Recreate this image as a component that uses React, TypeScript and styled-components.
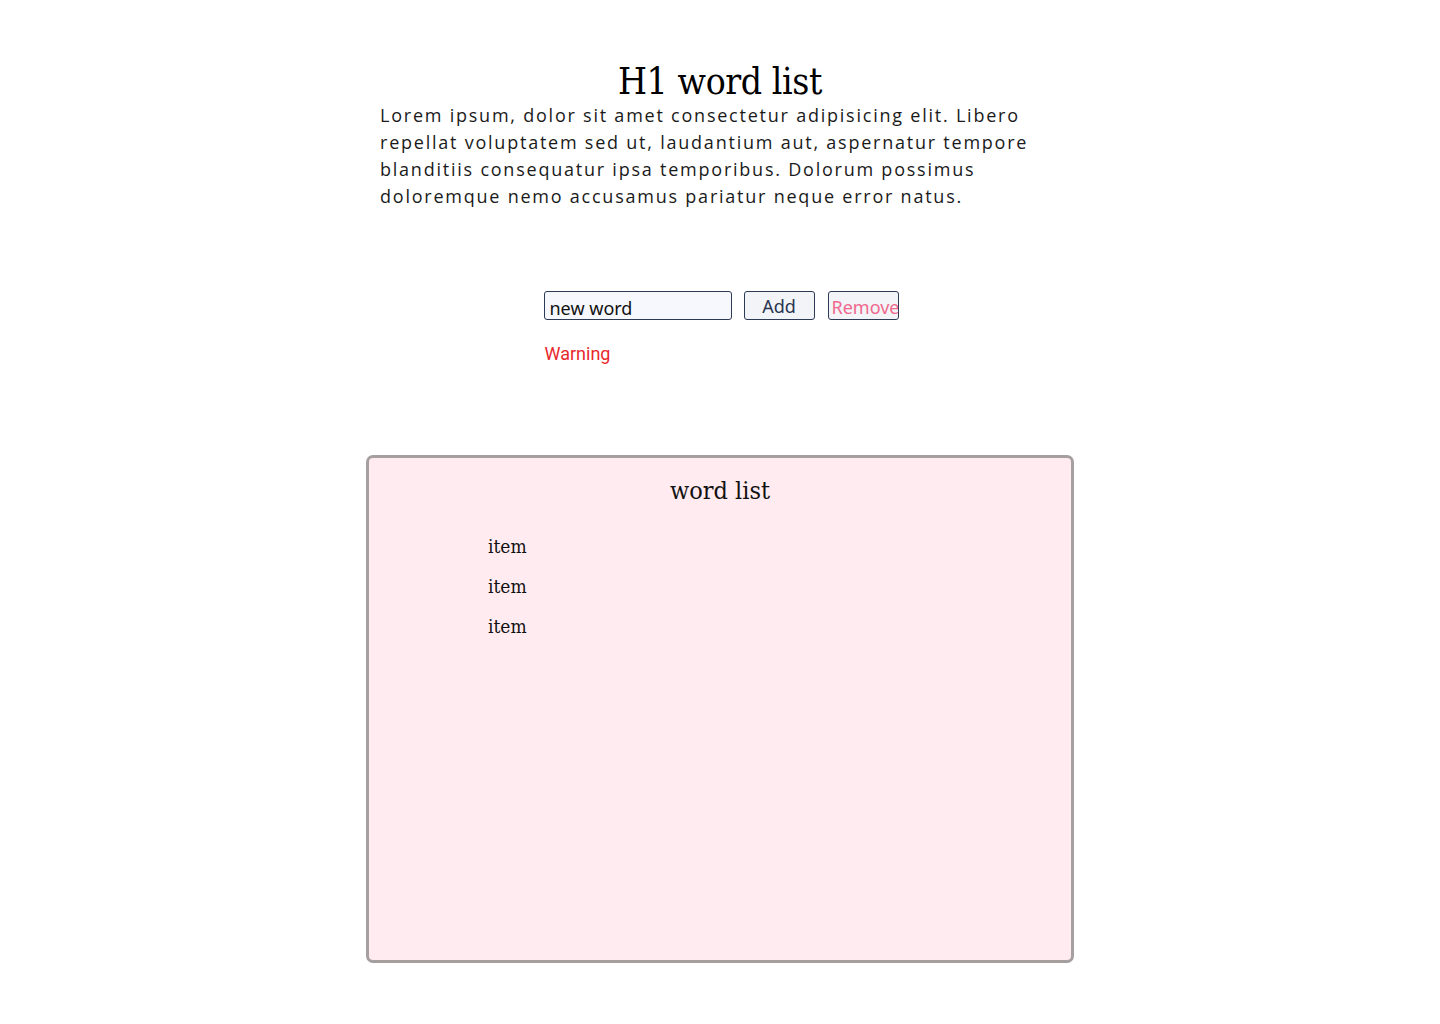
import React from "react";
import styled, { createGlobalStyle } from "styled-components";

const Global = createGlobalStyle`
  html, body { margin: 0; padding: 0; background: #ffffff; }
  body { font-family: "DejaVu Serif", serif; }
`;

const Page = styled.main`
  display: flex;
  flex-direction: column;
  align-items: center;
  padding-top: 60px;
`;

const Header = styled.header`
  width: 680px;
  display: flex;
  flex-direction: column;
`;

const Title = styled.h1`
  margin: 0;
  text-align: center;
  font-family: "DejaVu Serif Condensed", "DejaVu Serif", serif;
  font-weight: 400;
  font-size: 37px;
  line-height: 44px;
  color: #000;
  letter-spacing: -0.4px;
`;

const Intro = styled.p`
  margin: -2px 0 0;
  font-family: "Open Sans", "Lato", sans-serif;
  font-size: 18px;
  line-height: 27px;
  letter-spacing: 1.77px;
  color: #1a1a1a;
`;

const Controls = styled.section`
  margin-top: 81px;
  display: flex;
  flex-direction: column;
  align-items: flex-start;
  width: 355px;
`;

const Row = styled.div`
  display: flex;
  align-items: center;
  gap: 12px;
`;

const WordInput = styled.input`
  box-sizing: border-box;
  width: 188px;
  height: 29px;
  margin-left: 1px;
  border: 1.5px solid #2d3a55;
  border-radius: 3px;
  background: #f6f8fd;
  padding: 5px 5px 0;
  font-family: "Noto Sans", sans-serif;
  font-size: 18px;
  color: #111;
  outline: none;
`;

const Button = styled.button<{ $tone?: "danger" }>`
  box-sizing: border-box;
  width: 71px;
  height: 29px;
  border: 1.5px solid #2d3a55;
  border-radius: 3px;
  background: #f2f4f8;
  font-family: "Noto Sans", sans-serif;
  font-size: 18px;
  line-height: 1;
  color: ${(p) => (p.$tone === "danger" ? "#f0688d" : "#2a3550")};
  padding: ${(p) => (p.$tone === "danger" ? "3px 0 0 3px" : "0")};
  text-align: ${(p) => (p.$tone === "danger" ? "left" : "center")};
  white-space: nowrap;
  overflow: hidden;
  cursor: pointer;
`;

const Warning = styled.p`
  margin: 23px 0 0 2px;
  font-family: "Roboto", sans-serif;
  font-size: 18px;
  font-weight: 400;
  color: #e8282c;
`;

const ListBox = styled.section`
  box-sizing: border-box;
  margin-top: 91px;
  width: 708px;
  height: 508px;
  border: 3px solid #a59fa0;
  border-radius: 7px;
  background: #ffebf0;
  padding: 17px 0 0;
  display: flex;
  flex-direction: column;
`;

const ListTitle = styled.h2`
  margin: 0;
  text-align: center;
  font-family: "DejaVu Serif Condensed", "DejaVu Serif", serif;
  font-weight: 400;
  font-size: 25px;
  line-height: 32px;
  color: #111;
`;

const Items = styled.ul`
  list-style: none;
  margin: 27px 0 0;
  padding: 0 0 0 119px;
  display: flex;
  flex-direction: column;
  gap: 15px;
`;

const Item = styled.li`
  font-family: "DejaVu Serif Condensed", "DejaVu Serif", serif;
  font-size: 19px;
  line-height: 25px;
  color: #111;
`;

export default function App() {
  return (
    <>
      <Global />
      <Page>
        <Header>
          <Title>H1 word list</Title>
          <Intro>
            Lorem ipsum, dolor sit amet consectetur adipisicing elit. Libero
            repellat voluptatem sed ut, laudantium aut, aspernatur tempore
            blanditiis consequatur ipsa temporibus. Dolorum possimus
            doloremque nemo accusamus pariatur neque error natus.
          </Intro>
        </Header>
        <Controls>
          <Row>
            <WordInput defaultValue="new word" />
            <Button>Add</Button>
            <Button $tone="danger" style={{ marginLeft: 1 }}>Remove</Button>
          </Row>
          <Warning>Warning</Warning>
        </Controls>
        <ListBox>
          <ListTitle>word list</ListTitle>
          <Items>
            <Item>item</Item>
            <Item>item</Item>
            <Item>item</Item>
          </Items>
        </ListBox>
      </Page>
    </>
  );
}
